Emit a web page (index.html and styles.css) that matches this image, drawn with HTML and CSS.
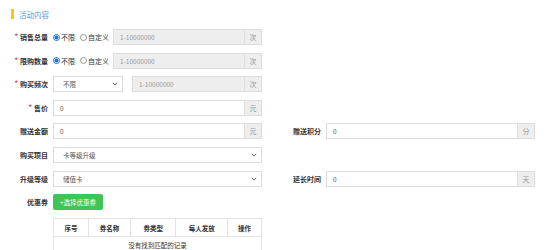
FILE: index.html
```html
<!DOCTYPE html>
<html lang="zh-CN">
<head>
    <meta charset="UTF-8">
    <meta name="viewport" content="width=device-width, initial-scale=1.0">
    <title>活动内容</title>
    <link rel="stylesheet" href="styles.css">
</head>
<body>
    <div class="section-title"><span class="bar"></span>活动内容</div>

    <div class="form">
        <!-- 销售总量 -->
        <div class="item">
            <label class="label"><i>*</i>销售总量</label>
            <div class="field">
                <div class="radios">
                    <span class="radio checked"></span><span class="radio-text">不限</span>
                    <span class="radio"></span><span class="radio-text">自定义</span>
                </div>
                <div class="input-group">
                    <div class="input disabled placeholder">1-10000000</div>
                    <div class="addon">次</div>
                </div>
            </div>
        </div>
        <div></div>

        <!-- 限购数量 -->
        <div class="item">
            <label class="label"><i>*</i>限购数量</label>
            <div class="field">
                <div class="radios">
                    <span class="radio checked"></span><span class="radio-text">不限</span>
                    <span class="radio"></span><span class="radio-text">自定义</span>
                </div>
                <div class="input-group">
                    <div class="input disabled placeholder">1-10000000</div>
                    <div class="addon">次</div>
                </div>
            </div>
        </div>
        <div></div>

        <!-- 购买频次 -->
        <div class="item">
            <label class="label"><i>*</i>购买频次</label>
            <div class="field">
                <div class="select small">
                    <span>不限</span>
                    <svg width="6" height="4" viewBox="0 0 6 4"><path d="M0.8 0.8 L3 3 L5.2 0.8" fill="none" stroke="#666" stroke-width="1"/></svg>
                </div>
                <div class="input-group freq">
                    <div class="input disabled placeholder">1-10000000</div>
                    <div class="addon">次</div>
                </div>
            </div>
        </div>
        <div></div>

        <!-- 售价 -->
        <div class="item">
            <label class="label"><i>*</i>售价</label>
            <div class="field">
                <div class="input-group">
                    <div class="input">0</div>
                    <div class="addon">元</div>
                </div>
            </div>
        </div>
        <div></div>

        <!-- 赠送 -->
        <div class="item">
            <label class="label">赠送金额</label>
            <div class="field">
                <div class="input-group">
                    <div class="input">0</div>
                    <div class="addon">元</div>
                </div>
            </div>
        </div>
        <div class="item">
            <label class="label">赠送积分</label>
            <div class="field">
                <div class="input-group">
                    <div class="input">0</div>
                    <div class="addon">分</div>
                </div>
            </div>
        </div>

        <!-- 购买项目 -->
        <div class="item">
            <label class="label">购买项目</label>
            <div class="field">
                <div class="select">
                    <span>卡等级升级</span>
                    <svg width="6" height="4" viewBox="0 0 6 4"><path d="M0.8 0.8 L3 3 L5.2 0.8" fill="none" stroke="#666" stroke-width="1"/></svg>
                </div>
            </div>
        </div>
        <div></div>

        <!-- 升级等级 -->
        <div class="item">
            <label class="label">升级等级</label>
            <div class="field">
                <div class="select">
                    <span>储值卡</span>
                    <svg width="6" height="4" viewBox="0 0 6 4"><path d="M0.8 0.8 L3 3 L5.2 0.8" fill="none" stroke="#666" stroke-width="1"/></svg>
                </div>
            </div>
        </div>
        <div class="item">
            <label class="label">延长时间</label>
            <div class="field">
                <div class="input-group">
                    <div class="input">0</div>
                    <div class="addon">天</div>
                </div>
            </div>
        </div>

        <!-- 优惠券 -->
        <div class="item">
            <label class="label">优惠券</label>
            <div class="field">
                <button class="btn-green">+选择优惠券</button>
            </div>
        </div>
        <div></div>
    </div>

    <table class="coupon-table">
        <thead>
            <tr>
                <th class="c1">序号</th>
                <th class="c2">券名称</th>
                <th class="c3">券类型</th>
                <th class="c4">每人发放</th>
                <th class="c5">操作</th>
            </tr>
        </thead>
        <tbody>
            <tr>
                <td colspan="5">没有找到匹配的记录</td>
            </tr>
        </tbody>
    </table>
</body>
</html>
```

FILE: styles.css
```css
body {
    margin: 0;
    font-family: "Noto Sans CJK SC", "Liberation Sans", sans-serif;
    font-size: 7px;
    color: #333;
    background: #fff;
}

.section-title {
    display: flex;
    align-items: center;
    height: 10px;
    margin: 9px 0 0 11px;
    font-size: 7.5px;
    color: #5b9bd5;
}

.section-title .bar {
    width: 3px;
    height: 10px;
    background: #f6c90e;
    margin-right: 5px;
}

.form {
    display: grid;
    grid-template-columns: 273px 273px;
    grid-auto-rows: 16px;
    row-gap: 7.6px;
    margin-top: 10px;
}

.item {
    display: flex;
    align-items: center;
    height: 16px;
}

.label {
    width: 48px;
    flex-shrink: 0;
    margin-right: 5px;
    text-align: right;
    font-weight: bold;
    font-size: 7px;
    color: #333;
    white-space: nowrap;
}

.label i {
    font-style: normal;
    color: #e53935;
    margin-right: 2px;
    position: relative;
    top: -1px;
}

.field {
    display: flex;
    align-items: center;
    width: 209px;
    height: 16px;
}

.radios {
    display: flex;
    align-items: center;
    width: 60px;
    flex-shrink: 0;
    white-space: nowrap;
}

.radio {
    flex-shrink: 0;
    width: 5px;
    height: 5px;
    border: 1px solid #999;
    border-radius: 50%;
    box-sizing: content-box;
    background: #fff;
    margin-right: 1px;
}

.radio.checked {
    border-color: #1a73e8;
    background: radial-gradient(circle, #1a73e8 0 1.8px, #fff 2.2px);
}

.radio-text {
    flex-shrink: 0;
    font-size: 7px;
    color: #333;
    margin-right: 5px;
}

.input-group {
    display: flex;
    flex: 1;
    height: 16px;
}

.input-group.freq {
    margin-left: 9px;
}

.input {
    flex: 1;
    box-sizing: border-box;
    height: 16px;
    border: 1px solid #ddd;
    border-right: none;
    background: #fff;
    padding-left: 6px;
    line-height: 14px;
    font-size: 6.5px;
    color: #555;
}

.input.disabled {
    background: #eee;
}

.input.placeholder {
    color: #999;
}

.addon {
    width: 18px;
    box-sizing: border-box;
    height: 16px;
    border: 1px solid #ddd;
    background: #eee;
    text-align: center;
    line-height: 14px;
    font-size: 7px;
    color: #999;
}

.select {
    display: flex;
    align-items: center;
    justify-content: space-between;
    box-sizing: border-box;
    width: 209px;
    height: 16px;
    border: 1px solid #ddd;
    background: #fff;
    padding: 0 4px 0 9px;
    font-size: 6.5px;
    color: #555;
}

.select.small {
    width: 70px;
    flex-shrink: 0;
}

.btn-green {
    height: 16px;
    width: 50px;
    padding: 0;
    border: none;
    border-radius: 2px;
    background: #3fc556;
    color: #fff;
    font-family: inherit;
    font-size: 6.5px;
}

.coupon-table {
    width: 209px;
    margin: 8px 0 0 53px;
    border-collapse: collapse;
    font-size: 6.5px;
}

.coupon-table th,
.coupon-table td {
    border: 1px solid #e3e3e3;
    text-align: center;
    padding: 0;
}

.coupon-table th {
    height: 17px;
    font-weight: bold;
    color: #333;
}

.coupon-table td {
    height: 16px;
    color: #333;
    font-weight: normal;
}

.c1 { width: 35px; }
.c2 { width: 42px; }
.c3 { width: 46px; }
.c4 { width: 52px; }
.c5 { width: 34px; }
```
